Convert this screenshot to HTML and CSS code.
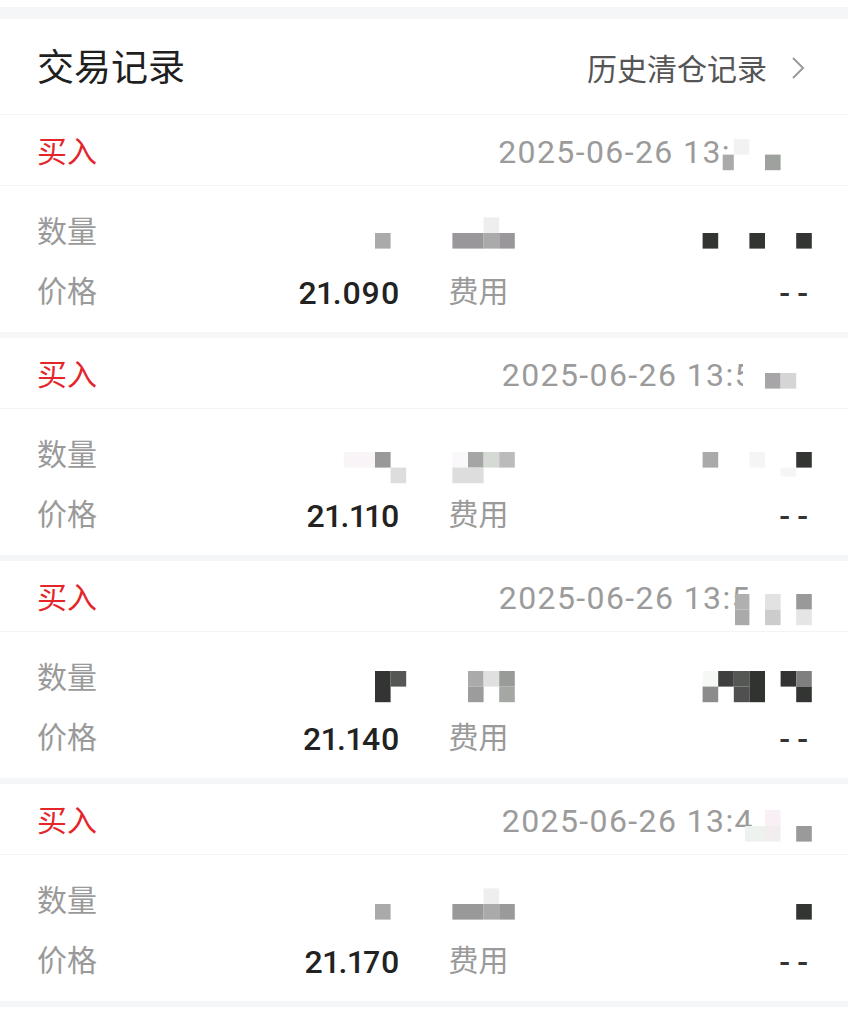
FILE: index.html
```html
<!DOCTYPE html>
<html lang="zh-CN">
<head>
<meta charset="utf-8">
<title>交易记录</title>
<link rel="stylesheet" href="styles.css">
</head>
<body>
<div class="page">
  <header class="head">
    <h1 class="title">交易记录</h1>
    <a class="more">历史清仓记录<svg class="chev" viewBox="0 0 14 24" width="14" height="24"><polyline points="2,2 12,12 2,22" fill="none" stroke="#9a9a9a" stroke-width="2"/></svg></a>
  </header>

  <article class="trade first">
    <div class="trade-top">
      <span class="side">买入</span>
      <span class="date">2025-06-26 13:<span class="tail tail-a"></span></span>
    </div>
    <div class="trade-body">
      <div class="cell"><span class="lbl">数量</span><span class="val"></span></div>
      <div class="cell"><span class="lbl"></span><span class="val"></span></div>
      <div class="cell"><span class="lbl">价格</span><span class="val num">21.090</span></div>
      <div class="cell"><span class="lbl">费用</span><span class="val dash">--</span></div>
    </div>
    <svg class="mosaic" viewBox="0 0 848 217" width="848" height="217">
      <rect x="722.7" y="39.6" width="11.1" height="15.6" fill="#aaaaaa"/>
      <rect x="733.8" y="24" width="15.6" height="15.6" fill="#f2f2f2"/>
      <rect x="765" y="39.6" width="15.6" height="15.6" fill="#9ea29e"/>
      <rect x="375" y="118" width="15.6" height="15.6" fill="#aaaaaa"/>
      <rect x="483.6" y="102.4" width="15.6" height="15.6" fill="#eeeeee"/>
      <rect x="452.4" y="118" width="31.2" height="15.6" fill="#9a979a"/>
      <rect x="483.6" y="118" width="15.6" height="15.6" fill="#aaaaaa"/>
      <rect x="499.2" y="118" width="15.6" height="15.6" fill="#9a979a"/>
      <rect x="702.6" y="118" width="15.6" height="15.6" fill="#333533"/>
      <rect x="749.4" y="118" width="15.6" height="15.6" fill="#333533"/>
      <rect x="796.2" y="118" width="15.6" height="15.6" fill="#333533"/>
    </svg>
  </article>

  <article class="trade">
    <div class="trade-top">
      <span class="side">买入</span>
      <span class="date">2025-06-26 13:5<span class="tail tail-b"></span></span>
    </div>
    <div class="trade-body">
      <div class="cell"><span class="lbl">数量</span><span class="val"></span></div>
      <div class="cell"><span class="lbl"></span><span class="val"></span></div>
      <div class="cell"><span class="lbl">价格</span><span class="val num">21.110</span></div>
      <div class="cell"><span class="lbl">费用</span><span class="val dash">--</span></div>
    </div>
    <svg class="mosaic" viewBox="0 0 848 217" width="848" height="217">
      <rect x="743" y="22" width="22" height="35" fill="#ffffff"/>
      <rect x="765" y="35" width="15.6" height="15.6" fill="#a7a5a7"/>
      <rect x="780.6" y="35" width="15.6" height="15.6" fill="#d5d5d5"/>
      <rect x="343.8" y="114" width="31.2" height="15.6" fill="#f8f4f8"/>
      <rect x="375" y="114" width="15.6" height="15.6" fill="#999999"/>
      <rect x="390.6" y="129.6" width="15.6" height="15.6" fill="#dddddd"/>
      <rect x="452.4" y="114" width="15.6" height="15.6" fill="#fbf8fb"/>
      <rect x="468" y="114" width="15.6" height="15.6" fill="#a5a5a5"/>
      <rect x="483.6" y="114" width="15.6" height="15.6" fill="#d5dad5"/>
      <rect x="499.2" y="114" width="15.6" height="15.6" fill="#bbbbbb"/>
      <rect x="452.4" y="129.6" width="31.2" height="15.6" fill="#dddddd"/>
      <rect x="702.6" y="114" width="15.6" height="15.6" fill="#aaaaaa"/>
      <rect x="749.4" y="114" width="15.6" height="15.6" fill="#f5f5f5"/>
      <rect x="796.2" y="114" width="15.6" height="15.6" fill="#333533"/>
      <rect x="780.6" y="129.6" width="15.6" height="9" fill="#f5f5f5"/>
    </svg>
  </article>

  <article class="trade">
    <div class="trade-top">
      <span class="side">买入</span>
      <span class="date">2025-06-26 13:5<span class="tail tail-c"></span></span>
    </div>
    <div class="trade-body">
      <div class="cell"><span class="lbl">数量</span><span class="val"></span></div>
      <div class="cell"><span class="lbl"></span><span class="val"></span></div>
      <div class="cell"><span class="lbl">价格</span><span class="val num">21.140</span></div>
      <div class="cell"><span class="lbl">费用</span><span class="val dash">--</span></div>
    </div>
    <svg class="mosaic" viewBox="0 0 848 217" width="848" height="217">
      <rect x="735" y="33" width="14.4" height="15.6" fill="#b0b0b0"/>
      <rect x="735" y="48.6" width="14.4" height="15.6" fill="#aaaaaa"/>
      <rect x="765" y="33" width="15.6" height="15.6" fill="#e2e2e2"/>
      <rect x="765" y="48.6" width="15.6" height="15.6" fill="#cccccc"/>
      <rect x="796.2" y="33" width="15.6" height="15.6" fill="#999999"/>
      <rect x="796.2" y="48.6" width="15.6" height="15.6" fill="#e5e5e5"/>
      <rect x="375" y="110" width="15.6" height="31.2" fill="#333533"/>
      <rect x="390.6" y="110" width="15.6" height="15.6" fill="#555755"/>
      <rect x="468" y="110" width="15.6" height="15.6" fill="#aaaaaa"/>
      <rect x="468" y="125.6" width="15.6" height="15.6" fill="#9c9c9c"/>
      <rect x="483.6" y="110" width="15.6" height="15.6" fill="#e0e0e0"/>
      <rect x="499.2" y="110" width="15.6" height="15.6" fill="#999b99"/>
      <rect x="499.2" y="125.6" width="15.6" height="15.6" fill="#a3a8a3"/>
      <rect x="702.6" y="110" width="15.6" height="15.6" fill="#f5f8f5"/>
      <rect x="702.6" y="125.6" width="15.6" height="15.6" fill="#8c8c8c"/>
      <rect x="718.2" y="110" width="15.6" height="15.6" fill="#3f3f3f"/>
      <rect x="733.8" y="110" width="15.6" height="15.6" fill="#555755"/>
      <rect x="733.8" y="125.6" width="15.6" height="15.6" fill="#4f504f"/>
      <rect x="749.4" y="110" width="15.6" height="31.2" fill="#313331"/>
      <rect x="780.6" y="110" width="15.6" height="15.6" fill="#333333"/>
      <rect x="796.2" y="110" width="15.6" height="15.6" fill="#7f7f7f"/>
      <rect x="796.2" y="125.6" width="15.6" height="15.6" fill="#333533"/>
    </svg>
  </article>

  <article class="trade">
    <div class="trade-top">
      <span class="side">买入</span>
      <span class="date">2025-06-26 13:4<span class="tail tail-d"></span></span>
    </div>
    <div class="trade-body">
      <div class="cell"><span class="lbl">数量</span><span class="val"></span></div>
      <div class="cell"><span class="lbl"></span><span class="val"></span></div>
      <div class="cell"><span class="lbl">价格</span><span class="val num">21.170</span></div>
      <div class="cell"><span class="lbl">费用</span><span class="val dash">--</span></div>
    </div>
    <svg class="mosaic" viewBox="0 0 848 217" width="848" height="217">
      <rect x="745" y="42" width="20" height="15.6" fill="#eef2ee"/>
      <rect x="765" y="26" width="15.6" height="16" fill="#f8f0f4"/>
      <rect x="765" y="42" width="15.6" height="15.6" fill="#f2eef0"/>
      <rect x="796.2" y="42" width="15.6" height="15.6" fill="#9a9a9a"/>
      <rect x="375" y="120" width="15.6" height="15.6" fill="#aaaaaa"/>
      <rect x="483.6" y="104.4" width="15.6" height="15.6" fill="#eeeeee"/>
      <rect x="452.4" y="120" width="31.2" height="15.6" fill="#999999"/>
      <rect x="483.6" y="120" width="15.6" height="15.6" fill="#aaaaaa"/>
      <rect x="499.2" y="120" width="15.6" height="15.6" fill="#9a9a9a"/>
      <rect x="796.2" y="120" width="15.6" height="15.6" fill="#333533"/>
    </svg>
  </article>
</div>
</body>
</html>
```

FILE: styles.css
```css
* { box-sizing: border-box; }

html, body {
  margin: 0;
  padding: 0;
  background: #ffffff;
}

body {
  padding-top: 7px;
  font-family: Roboto, "Noto Sans CJK SC", sans-serif;
  color: #222222;
}

.page {
  background: #f5f6f8;
  padding-top: 12px;
  padding-bottom: 6.5px;
  display: flex;
  flex-direction: column;
}

.head {
  height: 95px;
  background: #ffffff;
  display: flex;
  align-items: center;
  justify-content: space-between;
  padding: 0 37px;
}

.title {
  margin: 0 0 2px 0;
  font-family: "Noto Sans CJK SC", sans-serif;
  font-size: 37px;
  font-weight: 400;
  color: #1f1f1f;
  line-height: 1;
}

.more {
  display: flex;
  align-items: center;
  gap: 24px;
  font-family: "Noto Sans CJK SC", sans-serif;
  font-size: 30px;
  color: #555555;
  line-height: 1;
}

.chev {
  display: block;
  margin-right: 6px;
  margin-top: 2px;
}

.trade {
  position: relative;
  background: #ffffff;
}

.trade.first {
  border-top: 1px solid #f2f3f5;
}

.trade + .trade {
  margin-top: 6.5px;
}

.trade-top {
  height: 71px;
  padding: 3px 37px 0 37px;
  border-bottom: 1px solid #f2f3f5;
  display: flex;
  align-items: center;
  justify-content: space-between;
}

.side {
  font-family: "Noto Sans CJK SC", sans-serif;
  font-size: 30px;
  color: #e4262b;
  line-height: 1;
  margin-bottom: 6px;
}

.date {
  display: flex;
  align-items: center;
  font-size: 32px;
  letter-spacing: 1.4px;
  color: #9b9b9b;
  line-height: 1;
  white-space: nowrap;
}

.tail { display: inline-block; height: 1px; }
.tail-a { width: 80px; }
.tail-b { width: 57px; }
.tail-c { width: 60px; }
.tail-d { width: 57px; }

.trade-body {
  padding: 17px 37px 8.5px 37px;
  display: grid;
  grid-template-columns: 1fr 1fr;
  column-gap: 49px;
  grid-auto-rows: 60px;
}

.cell {
  display: flex;
  align-items: center;
  justify-content: space-between;
}

.lbl {
  font-family: "Noto Sans CJK SC", sans-serif;
  font-size: 30px;
  color: #9a9a9a;
  line-height: 1;
  margin-bottom: 9px;
}

.val {
  line-height: 1;
}

.num {
  font-size: 32px;
  font-weight: 500;
  color: #222222;
  font-variant-numeric: proportional-nums;
  letter-spacing: 0.6px;
  margin-right: -0.6px;
}

.dash {
  font-size: 32px;
  font-weight: 500;
  color: #333333;
  letter-spacing: 7px;
  margin-right: -4px;
}

.mosaic {
  position: absolute;
  left: 0;
  top: 0;
  pointer-events: none;
}
```
